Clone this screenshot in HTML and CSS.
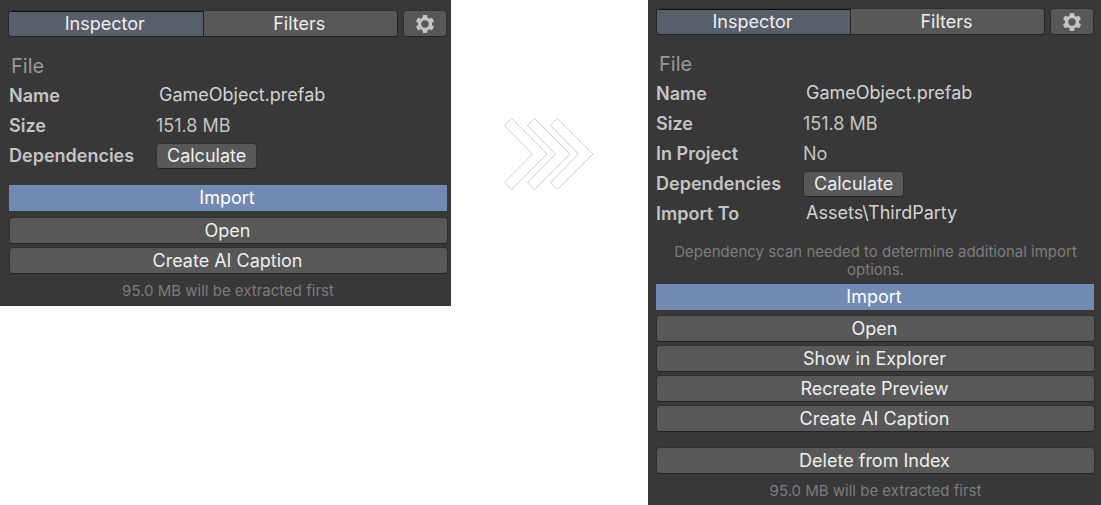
FILE: index.html
```html
<!DOCTYPE html>
<html lang="en">
<head>
<meta charset="utf-8">
<meta name="viewport" content="width=device-width, initial-scale=1">
<title>Inspector</title>
<link rel="stylesheet" href="styles.css">
</head>
<body>
<svg class="defs" aria-hidden="true">
  <symbol id="gear" viewBox="0 0 20 20">
    <path fill-rule="evenodd" d="M8 1h4l.6 2.700 1.700 1 2.700-.9 2 3.500-2 1.800v1.800l2 1.800-2 3.500-2.700-.9-1.700 1L12 19H8l-.6-2.700-1.700-1-2.700.9-2-3.500 2-1.800V9.100L1 7.300l2-3.500 2.700.9 1.700-1zM10 6.300a3.700 3.700 0 1 0 0 7.400 3.700 3.700 0 0 0 0-7.400z"/>
  </symbol>
</svg>
<main class="compare">
  <section class="panel panel-before">
    <div class="toolbar">
      <div class="tabs">
        <button class="tab tab-active" type="button">Inspector</button>
        <button class="tab" type="button">Filters</button>
      </div>
      <button class="btn btn-settings" type="button" aria-label="Settings"><svg class="gear"><use href="#gear"/></svg></button>
    </div>
    <h2 class="heading">File</h2>
    <dl class="fields">
      <dt>Name</dt><dd class="selectable">GameObject.prefab</dd>
      <dt>Size</dt><dd>151.8 MB</dd>
      <dt>Dependencies</dt><dd><button class="btn btn-small" type="button">Calculate</button></dd>
    </dl>
    <div class="actions">
      <button class="btn-primary" type="button">Import</button>
      <button class="btn" type="button">Open</button>
      <button class="btn" type="button">Create AI Caption</button>
    </div>
    <p class="note">95.0 MB will be extracted first</p>
  </section>

  <div class="arrows">
    <svg class="chevrons" viewBox="0 0 91 74" aria-hidden="true">
      <path d="M1.500 8.500l7-7 35.500 35.500-35.500 35.500-7-7 28-28.500z"/>
      <path d="M24.500 8.500l7-7 35.500 35.500-35.500 35.500-7-7 28-28.500z"/>
      <path d="M47.500 8.500l7-7 35.500 35.500-35.500 35.500-7-7 28-28.500z"/>
    </svg>
  </div>

  <section class="panel panel-after">
    <div class="toolbar">
      <div class="tabs">
        <button class="tab tab-active" type="button">Inspector</button>
        <button class="tab" type="button">Filters</button>
      </div>
      <button class="btn btn-settings" type="button" aria-label="Settings"><svg class="gear"><use href="#gear"/></svg></button>
    </div>
    <h2 class="heading">File</h2>
    <dl class="fields">
      <dt>Name</dt><dd class="selectable">GameObject.prefab</dd>
      <dt>Size</dt><dd>151.8 MB</dd>
      <dt>In Project</dt><dd>No</dd>
      <dt>Dependencies</dt><dd><button class="btn btn-small" type="button">Calculate</button></dd>
      <dt>Import To</dt><dd class="selectable">Assets\ThirdParty</dd>
    </dl>
    <p class="note note-scan">Dependency scan needed to determine additional import options.</p>
    <div class="actions">
      <button class="btn-primary" type="button">Import</button>
      <button class="btn" type="button">Open</button>
      <button class="btn" type="button">Show in Explorer</button>
      <button class="btn" type="button">Recreate Preview</button>
      <button class="btn" type="button">Create AI Caption</button>
      <button class="btn btn-apart" type="button">Delete from Index</button>
    </div>
    <p class="note">95.0 MB will be extracted first</p>
  </section>
</main>
</body>
</html>
```
FILE: styles.css
```css
* {
  box-sizing: border-box;
}

body {
  margin: 0;
  background: #fff;
  color: #c4c4c4;
  font: 18px/26px Inter, "Liberation Sans", sans-serif;
}

button {
  margin: 0;
  padding: 0 2px 0 0;
  font: inherit;
  color: #eee;
}

.defs {
  position: absolute;
  width: 0;
  height: 0;
}

.compare {
  display: grid;
  grid-template-columns: 451fr 197fr 453fr;
  align-items: start;
}

.panel {
  background: #383838;
}

.panel-before {
  padding: 10px 3px 6px 8px;
}

.panel-after {
  padding: 8px 6px 5px 8px;
}

.toolbar {
  display: flex;
  gap: 5px;
  padding-right: 1px;
}

.tabs {
  display: flex;
  flex: 1;
  border: 1px solid #242424;
  border-top-color: #303030;
  border-radius: 4px;
  overflow: hidden;
}

.tab {
  flex: 1;
  height: 25px;
  border: 0;
  background: #585858;
  line-height: 25px;
}

.tab-active {
  border-right: 1px solid #242424;
  background: #575f6b;
  box-shadow: inset 0 1px #101010;
}

.btn {
  height: 27px;
  border: 1px solid #303030;
  border-bottom-color: #242424;
  border-radius: 4px;
  background: #585858;
  line-height: 25px;
}

.btn-settings {
  display: grid;
  place-items: center;
  width: 44px;
  padding: 0;
}

.gear {
  width: 20px;
  height: 20px;
  fill: #c4c4c4;
}

.btn-small {
  height: 26px;
  padding: 0 10px;
  line-height: 24px;
}

.heading {
  margin: 14px 0 0 3px;
  color: #989898;
  font-size: 20px;
  font-weight: 400;
  line-height: 30px;
}

.fields {
  display: grid;
  grid-template-columns: 147px 1fr;
  grid-auto-rows: 30px;
  align-items: center;
  margin: 0;
}

.panel-before .fields,
.panel-before .actions {
  margin-left: 1px;
}

.fields dt {
  font-weight: 600;
}

.fields dd {
  display: flex;
  margin: 0;
}

.fields .selectable {
  padding: 0 0 2px 3px;
  color: #d2d2d2;
}

.actions {
  display: flex;
  flex-direction: column;
  gap: 3px;
  margin-top: 14px;
}

.btn-primary {
  height: 26px;
  margin: 0 1px 3px 0;
  border: 0;
  background: #7189b3;
  color: #fff;
}

.btn-apart {
  margin-top: 12px;
}

.note {
  margin: 8px 0 0;
  color: #7c7c7c;
  font-size: 15px;
  line-height: 18px;
  text-align: center;
}

.note-scan {
  margin-top: 14px;
}

.note-scan + .actions {
  margin-top: 5px;
}

.panel-after .btn-primary {
  margin-bottom: 2px;
}

.arrows {
  display: flex;
  justify-content: center;
  padding: 117px 2px 0 0;
}

.chevrons {
  width: 91px;
  height: 74px;
  fill: #fff;
  stroke: #d0d0d0;
}
```
